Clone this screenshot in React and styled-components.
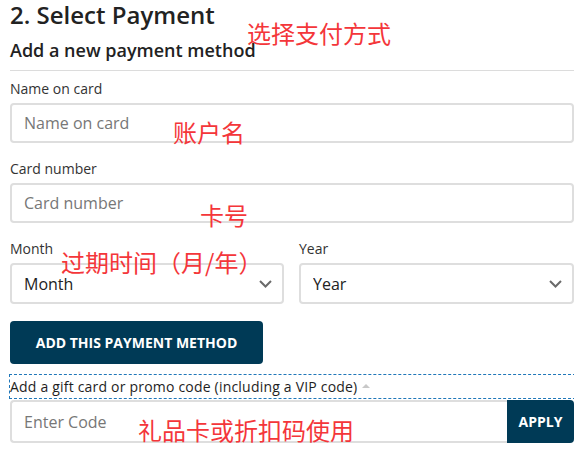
import React from "react";
import styled, { createGlobalStyle } from "styled-components";

const GlobalStyle = createGlobalStyle`
  body {
    margin: 0;
    background: #fff;
    font-family: "Open Sans", "Liberation Sans", sans-serif;
    color: #222;
  }
`;

const Page = styled.div`
  position: relative;
  width: 564px;
  padding: 2px 0 0 10px;
`;

const Title = styled.h2`
  margin: 0;
  font-size: 24px;
  line-height: 26px;
  font-weight: 600;
  color: #222;
`;

const SubTitle = styled.h3`
  margin: 10px 0 0;
  font-size: 18px;
  line-height: 24px;
  font-weight: 600;
  color: #222;
`;

const Divider = styled.hr`
  margin: 8px -10px 8px 0;
  border: none;
  border-top: 1px solid #dcdcdc;
`;

const Field = styled.div`
  display: flex;
  flex-direction: column;
  margin-top: ${(p) => (p.$first ? "0" : "16px")};
`;

const Label = styled.label`
  font-size: 14px;
  line-height: 20px;
  color: #333;
  margin-bottom: 4px;
`;

const Input = styled.input`
  box-sizing: border-box;
  height: 40px;
  width: 100%;
  border: 2px solid #dedede;
  border-radius: 4px;
  padding: 0 12px;
  font-family: inherit;
  font-size: 16px;
  color: #222;
  outline: none;
  &::placeholder {
    color: #777;
  }
`;

const Row = styled.div`
  display: grid;
  grid-template-columns: 274px 1fr;
  column-gap: 15px;
  margin-top: 16px;
`;

const SelectWrap = styled.div`
  position: relative;
`;

const Select = styled.select`
  box-sizing: border-box;
  width: 100%;
  height: 41px;
  border: 2px solid #dedede;
  border-radius: 4px;
  padding: 0 12px;
  background: #fff;
  font-family: inherit;
  font-size: 16px;
  color: #222;
  appearance: none;
  outline: none;
`;

const Chevron = styled.svg`
  position: absolute;
  right: 12px;
  top: 17px;
  pointer-events: none;
`;

const PrimaryButton = styled.button`
  margin-top: 17px;
  width: 253px;
  height: 43px;
  border: none;
  border-radius: 4px;
  background: #003a56;
  color: #fff;
  font-family: inherit;
  font-size: 14px;
  font-weight: 700;
  text-transform: uppercase;
`;

const GiftToggle = styled.div`
  margin-top: 11px;
  margin-right: -1px;
  height: 23px;
  line-height: 22px;
  font-size: 14px;
  letter-spacing: 0.2px;
  color: #1e1e1e;
  outline: 1px dashed #1f77b9;
  display: flex;
  align-items: center;
`;

const Caret = styled.span`
  display: inline-block;
  margin-left: 5px;
  margin-top: -2px;
  width: 0;
  height: 0;
  border-left: 4px solid transparent;
  border-right: 4px solid transparent;
  border-bottom: 4px solid #c8c8c8;
`;

const CodeGroup = styled.div`
  display: flex;
  margin-top: 2px;
  height: 43px;
`;

const CodeInput = styled(Input)`
  height: 43px;
  flex: 1;
  border-right: none;
  border-radius: 4px 0 0 4px;
`;

const ApplyButton = styled.button`
  width: 67px;
  border: none;
  border-radius: 0 4px 4px 0;
  background: #003a56;
  color: #fff;
  font-family: inherit;
  font-size: 14px;
  font-weight: 700;
`;

const Note = styled.span`
  position: absolute;
  left: ${(p) => p.$x}px;
  top: ${(p) => p.$y}px;
  font-family: "Noto Sans CJK SC", "Noto Sans", sans-serif;
  font-size: 24px;
  line-height: 1;
  color: #f4363a;
  white-space: nowrap;
  z-index: 2;
`;

const ChevronIcon = () => (
  <Chevron width="13" height="8" viewBox="0 0 13 8">
    <polyline points="1,1 6.5,6.5 12,1" fill="none" stroke="#6a6a6a" strokeWidth="2" />
  </Chevron>
);

const App = () => {
  return (
    <Page>
      <GlobalStyle />
      <Title>2. Select Payment</Title>
      <SubTitle>Add a new payment method</SubTitle>
      <Divider />
      <Field $first>
        <Label>Name on card</Label>
        <Input placeholder="Name on card" />
      </Field>
      <Field>
        <Label>Card number</Label>
        <Input placeholder="Card number" />
      </Field>
      <Row>
        <Field $first>
          <Label>Month</Label>
          <SelectWrap>
            <Select defaultValue="">
              <option value="">Month</option>
            </Select>
            <ChevronIcon />
          </SelectWrap>
        </Field>
        <Field $first>
          <Label>Year</Label>
          <SelectWrap>
            <Select defaultValue="">
              <option value="">Year</option>
            </Select>
            <ChevronIcon />
          </SelectWrap>
        </Field>
      </Row>
      <PrimaryButton>Add this payment method</PrimaryButton>
      <GiftToggle>
        Add a gift card or promo code (including a VIP code)
        <Caret />
      </GiftToggle>
      <CodeGroup>
        <CodeInput placeholder="Enter Code" />
        <ApplyButton>APPLY</ApplyButton>
      </CodeGroup>

      <Note $x={247} $y={21}>选择支付方式</Note>
      <Note $x={173} $y={120}>账户名</Note>
      <Note $x={200} $y={203}>卡号</Note>
      <Note $x={61} $y={250}>过期时间（月/年）</Note>
      <Note $x={138} $y={418}>礼品卡或折扣码使用</Note>
    </Page>
  );
};

export default App;
